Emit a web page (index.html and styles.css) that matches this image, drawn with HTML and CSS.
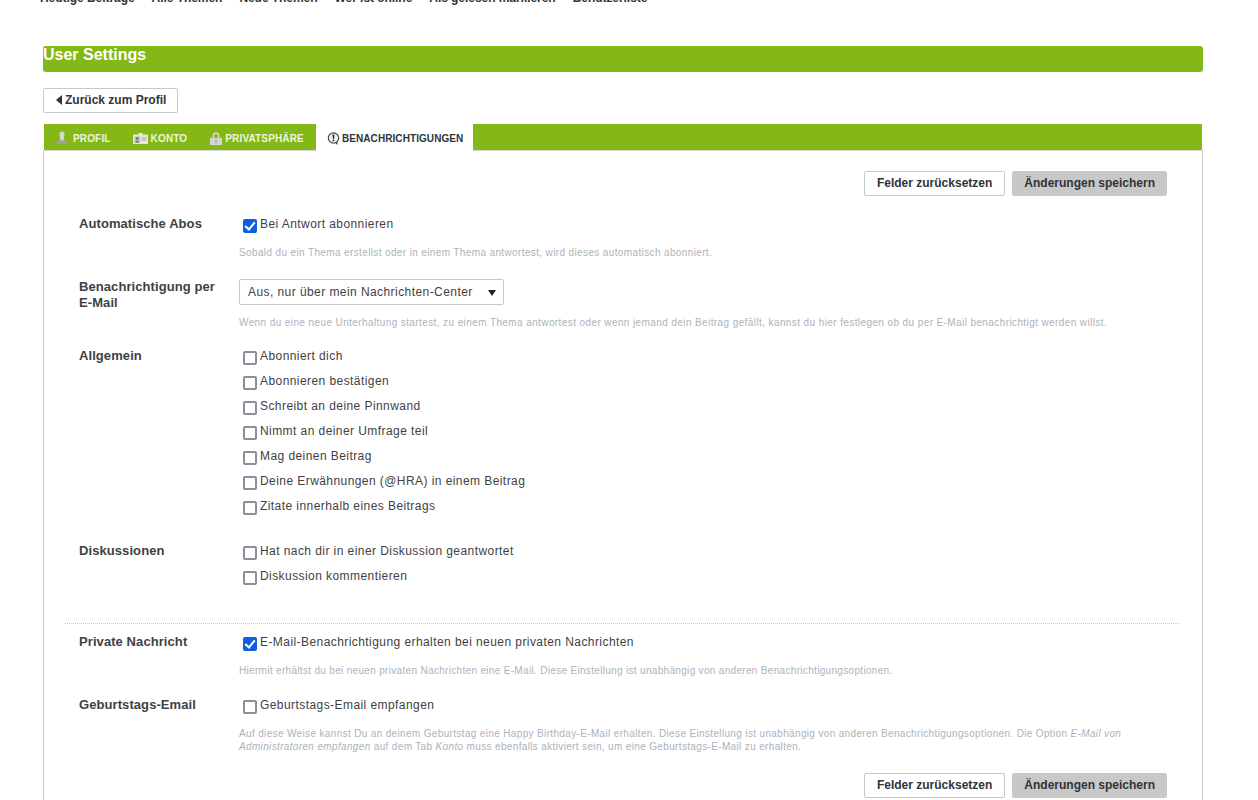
FILE: index.html
```html
<!DOCTYPE html>
<html lang="de">
<head>
<meta charset="utf-8">
<title>User Settings</title>
<link rel="stylesheet" href="styles.css">
</head>
<body>
<nav class="topnav">
  <a>Heutige Beiträge</a><a>Alle Themen</a><a>Neue Themen</a><a>Wer ist online</a><a>Als gelesen markieren</a><a>Benutzerliste</a>
</nav>
<main class="page">
  <h1 class="title">User Settings</h1>
  <a class="back"><span class="back-arrow"></span>Zurück zum Profil</a>
  <div class="tabs">
    <a class="tab tab-profil"><svg class="ico" viewBox="0 0 14 14"><path fill="#9aa38d" d="M4.800 8.500L1 11V13H13V11L9.200 8.500Z"/><path fill="#d6dacd" d="M7 .5C9 .5 9.700 2 9.500 4C9.300 6 8.600 8 8.600 9.500H5.400C5.400 8 4.700 6 4.500 4C4.300 2 5 .5 7 .5Z"/></svg>PROFIL</a>
    <a class="tab tab-konto"><svg class="ico ico-card" viewBox="0 0 15 11"><path fill="#e6e8e0" d="M0 1.500H5.500V0H9.500V1.500H15V11H0Z"/><rect x="1.500" y="3.500" width="5.500" height="6" fill="#bcc0b4"/><circle cx="4.250" cy="5.500" r="1.300" fill="#6f7569"/><path fill="#6f7569" d="M2.300 9.500C2.300 7.300 6.200 7.300 6.200 9.500Z"/><path fill="#a5aa9c" d="M8.500 4.500H13.500V5.500H8.500ZM8.500 6.500H13.500V7.500H8.500Z"/></svg>KONTO</a>
    <a class="tab tab-privat"><svg class="ico ico-lock" viewBox="0 0 12 13"><path fill="#d3d7cb" fill-rule="evenodd" d="M2.500 6V3.500C2.500 -.8 9.500 -.8 9.500 3.500V6H12V13H0V6ZM4.300 6H7.700V3.500C7.700 1.500 4.300 1.500 4.300 3.500Z"/><rect x="5.200" y="8" width="1.600" height="2.500" fill="#a5aa9c"/></svg>PRIVATSPHÄRE</a>
    <a class="tab tab-active"><svg class="ico ico-bubble" viewBox="0 0 14 14"><path d="M8 11L11.500 14L11 9.500Z" fill="#3f4447"/><circle cx="7" cy="6.500" r="5.600" fill="#eef0ee" stroke="#3f4447" stroke-width="1.200"/><path d="M6 2.800H8L7.600 7.500H6.400ZM6.100 8.300H7.900V10H6.100Z" fill="#23272a"/></svg>BENACHRICHTIGUNGEN</a>
  </div>
  <form class="panel">
    <div class="actions">
      <button type="button" class="btn">Felder zurücksetzen</button>
      <button type="button" class="btn btn-save">Änderungen speichern</button>
    </div>

    <div class="row row-abos">
      <div class="label">Automatische Abos</div>
      <div class="field">
        <label class="check"><input type="checkbox" checked>Bei Antwort abonnieren</label>
        <p class="hint">Sobald du ein Thema erstellst oder in einem Thema antwortest, wird dieses automatisch abonniert.</p>
      </div>
    </div>

    <div class="row row-mail">
      <div class="label">Benachrichtigung per E-Mail</div>
      <div class="field">
        <div class="select">Aus, nur über mein Nachrichten-Center<span class="caret"></span></div>
        <p class="hint">Wenn du eine neue Unterhaltung startest, zu einem Thema antwortest oder wenn jemand dein Beitrag gefällt, kannst du hier festlegen ob du per E-Mail benachrichtigt werden willst.</p>
      </div>
    </div>

    <div class="row row-general">
      <div class="label">Allgemein</div>
      <div class="field">
        <label class="check"><input type="checkbox">Abonniert dich</label>
        <label class="check"><input type="checkbox">Abonnieren bestätigen</label>
        <label class="check"><input type="checkbox">Schreibt an deine Pinnwand</label>
        <label class="check"><input type="checkbox">Nimmt an deiner Umfrage teil</label>
        <label class="check"><input type="checkbox">Mag deinen Beitrag</label>
        <label class="check"><input type="checkbox">Deine Erwähnungen (@HRA) in einem Beitrag</label>
        <label class="check"><input type="checkbox">Zitate innerhalb eines Beitrags</label>
      </div>
    </div>

    <div class="row row-disc">
      <div class="label">Diskussionen</div>
      <div class="field">
        <label class="check"><input type="checkbox">Hat nach dir in einer Diskussion geantwortet</label>
        <label class="check"><input type="checkbox">Diskussion kommentieren</label>
      </div>
    </div>

    <hr class="sep">

    <div class="row row-pm">
      <div class="label">Private Nachricht</div>
      <div class="field">
        <label class="check"><input type="checkbox" checked>E-Mail-Benachrichtigung erhalten bei neuen privaten Nachrichten</label>
        <p class="hint">Hiermit erhältst du bei neuen privaten Nachrichten eine E-Mail. Diese Einstellung ist unabhängig von anderen Benachrichtigungsoptionen.</p>
      </div>
    </div>

    <div class="row row-bday">
      <div class="label">Geburtstags-Email</div>
      <div class="field">
        <label class="check"><input type="checkbox">Geburtstags-Email empfangen</label>
        <p class="hint">Auf diese Weise kannst Du an deinem Geburtstag eine Happy Birthday-E-Mail erhalten. Diese Einstellung ist unabhängig von anderen Benachrichtigungsoptionen. Die Option <em>E-Mail von Administratoren empfangen</em> auf dem Tab <em>Konto</em> muss ebenfalls aktiviert sein, um eine Geburtstags-E-Mail zu erhalten.</p>
      </div>
    </div>

    <div class="actions actions-bottom">
      <button type="button" class="btn">Felder zurücksetzen</button>
      <button type="button" class="btn btn-save">Änderungen speichern</button>
    </div>
  </form>
</main>
</body>
</html>
```
FILE: styles.css
```css
html, body {
  margin: 0;
  padding: 0;
  height: 800px;
  overflow: hidden;
  background: #fff;
  font-family: "Liberation Sans", Arial, sans-serif;
  color: #3a3a3a;
}

.topnav {
  display: flex;
  gap: 17px;
  height: 14px;
  margin: -9px 0 0 40px;
  font-size: 12px;
  font-weight: 700;
  line-height: 14px;
  letter-spacing: -0.05px;
  color: #333;
}

.page {
  margin: 41px 55px 0 43px;
}

.title {
  margin: 0;
  height: 26px;
  background: #84b816;
  border-radius: 3px;
  color: #fff;
  font-size: 16px;
  font-weight: 700;
  line-height: 18px;
}

.back {
  display: inline-flex;
  align-items: center;
  box-sizing: border-box;
  width: 135px;
  height: 25px;
  margin-top: 16px;
  padding: 0 0 2px 12px;
  border: 1px solid #c4c9cc;
  border-radius: 2px;
  font-size: 12px;
  font-weight: 700;
  color: #2f3437;
}

.back-arrow {
  width: 0;
  height: 0;
  margin-right: 3px;
  border-style: solid;
  border-width: 5px 6px 5px 0;
  border-color: transparent #2f3437 transparent transparent;
}

.tabs {
  display: flex;
  height: 26px;
  margin: 11px 1px 0;
  background: #84b816;
  font-size: 10px;
  font-weight: 700;
  letter-spacing: 0.15px;
}

.tab {
  display: flex;
  align-items: center;
  padding: 2px 0 0;
  color: #eef5dc;
}

.tab-profil { margin-left: 11px; }
.tab-konto { margin-left: 22px; }
.tab-privat { margin-left: 23px; }

.tab-active {
  position: relative;
  margin: 0 0 -1px 12px;
  padding: 2px 10px 0 11px;
  background: #fff;
  color: #2f3437;
  letter-spacing: 0.08px;
}

.ico {
  width: 14px;
  height: 14px;
  margin-right: 4px;
}

.ico-card { width: 15px; height: 11px; margin-right: 3px; }
.ico-lock { width: 12px; height: 13px; margin-right: 3px; }
.ico-bubble { width: 13px; height: 13px; margin-right: 2px; }

.panel {
  box-sizing: border-box;
  height: 700px;
  border: 1px solid #c8c8c8;
  border-top-color: #d8d8d8;
  padding: 20px 35px 0 21px;
}

.actions {
  display: flex;
  justify-content: flex-end;
  gap: 7px;
}

.actions-bottom {
  margin-top: 20px;
}

.btn {
  box-sizing: border-box;
  height: 25px;
  padding: 0 12px 2px;
  border: 1px solid #c4c9cc;
  border-radius: 2px;
  background: #fff;
  color: #2f3437;
  font: 700 12px/1 "Liberation Sans", Arial, sans-serif;
}

.btn-save {
  padding: 0 11px 2px;
  background: #c8c8c8;
  border-color: #c8c8c8;
}

.row {
  display: grid;
  grid-template-columns: 160px 1fr;
  padding-left: 14px;
}

.label {
  padding-right: 10px;
  font-size: 13px;
  font-weight: 700;
  line-height: 16px;
  letter-spacing: 0.08px;
  color: #3f4145;
}

.field {
  min-width: 0;
}

.check {
  display: flex;
  align-items: flex-start;
  height: 25px;
  font-size: 12px;
  line-height: 16px;
  color: #3f4145;
  letter-spacing: 0.43px;
}

.check input {
  appearance: none;
  position: relative;
  box-sizing: border-box;
  flex: none;
  width: 14px;
  height: 14px;
  margin: 3px 3px 0 4px;
  border: 2px solid #8f8d9b;
  border-radius: 2px;
  background: #fff;
}

.check input:checked {
  background: #0b60e0;
  border-color: #0b60e0;
}

.check input:checked::after {
  content: "";
  position: absolute;
  left: 2px;
  top: -1px;
  width: 4px;
  height: 8px;
  border: solid #fff;
  border-width: 0 2px 2px 0;
  transform: rotate(40deg);
}

.hint {
  margin: 0;
  font-size: 10px;
  line-height: 13px;
  color: #aeb2b8;
  letter-spacing: 0.37px;
}

.hint em {
  font-style: italic;
}

.select {
  position: relative;
  box-sizing: border-box;
  width: 265px;
  height: 26px;
  padding: 0 8px;
  border: 1px solid #c8c8c8;
  border-radius: 2px;
  font-size: 12px;
  line-height: 24px;
  letter-spacing: 0.43px;
  color: #3f4145;
}

.caret {
  position: absolute;
  top: 10px;
  right: 7px;
  width: 0;
  height: 0;
  border-style: solid;
  border-width: 6px 4px 0;
  border-color: #222 transparent transparent;
}

.row-abos { margin-top: 20px; }
.row-abos .check { height: 30px; }
.row-mail { margin-top: 20px; }
.row-mail .hint { margin-top: 11px; letter-spacing: 0.4px; }
.row-general { margin-top: 19px; }
.row-disc { margin-top: 20px; }

.sep {
  margin: 30px -13px 10px 0;
  border: 0;
  border-top: 1px dotted #c8c8c8;
}

.row-pm .check { height: 30px; }
.row-pm .hint { letter-spacing: 0.32px; }
.row-bday { margin-top: 20px; }
.row-bday .check { height: 30px; }
.row-bday .hint { letter-spacing: 0.35px; }
```
